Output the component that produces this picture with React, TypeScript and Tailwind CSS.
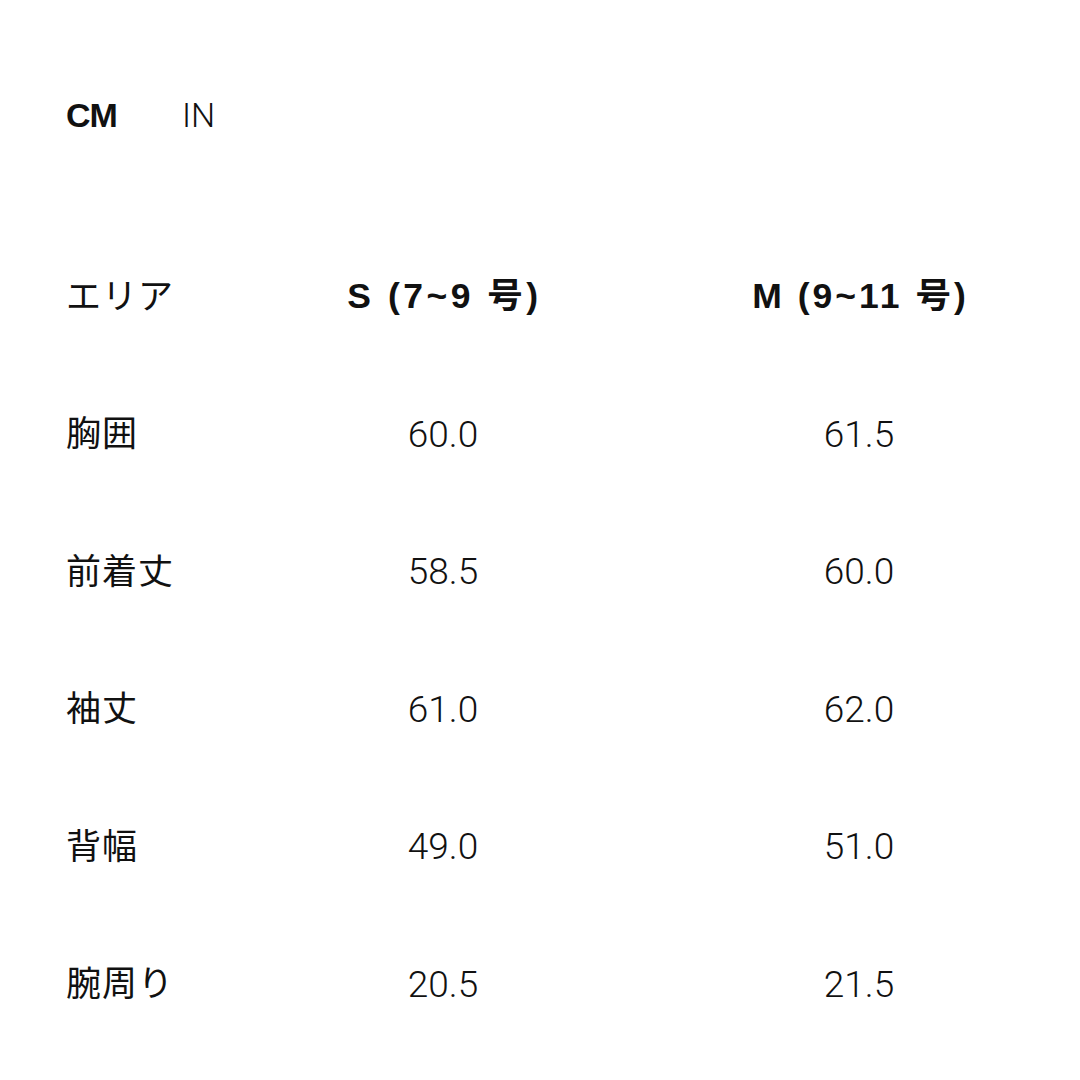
import React from 'react';

const rows: [string, string, string][] = [
  ['胸囲', '60.0', '61.5'],
  ['前着丈', '58.5', '60.0'],
  ['袖丈', '61.0', '62.0'],
  ['背幅', '49.0', '51.0'],
  ['腕周り', '20.5', '21.5'],
];

const font = "font-['Liberation_Sans','Noto_Sans_CJK_JP',sans-serif]";
const thin = "font-['Roboto','Noto_Sans_CJK_JP',sans-serif] font-light";

export default function App() {
  return (
    <div className={`min-h-[1080px] w-[1080px] bg-white text-[#111] ${font}`}>
      <div className="pl-[66px] pt-[95px]">
        {/* unit toggle */}
        <div className="flex h-[40px] items-center text-[34px] leading-[40px]">
          <span className="font-bold tracking-[-1px]">CM</span>
          <span className={`ml-[65px] ${thin}`}>IN</span>
        </div>

        {/* size table */}
        <div className="mt-[93px] grid grid-cols-[169px_416px_416px]">
          <div className="flex h-[137.5px] items-center text-[35px] tracking-[1px]">エリア</div>
          <div className="flex h-[137.5px] items-center justify-center pl-[3px] text-[35.5px] font-bold tracking-[3.5px]">
            S (7~9 号)
          </div>
          <div className="flex h-[137.5px] items-center justify-center pl-[3px] text-[35.5px] font-bold tracking-[3px]">
            M (9~11 号)
          </div>
          {rows.map(([label, s, m]) => (
            <React.Fragment key={label}>
              <div className="flex h-[137.5px] items-center text-[35px] tracking-[1px]">{label}</div>
              <div className={`flex h-[137.5px] items-center justify-center text-[37px] ${thin}`}>{s}</div>
              <div className={`flex h-[137.5px] items-center justify-center text-[37px] ${thin}`}>{m}</div>
            </React.Fragment>
          ))}
        </div>
      </div>
    </div>
  );
}
